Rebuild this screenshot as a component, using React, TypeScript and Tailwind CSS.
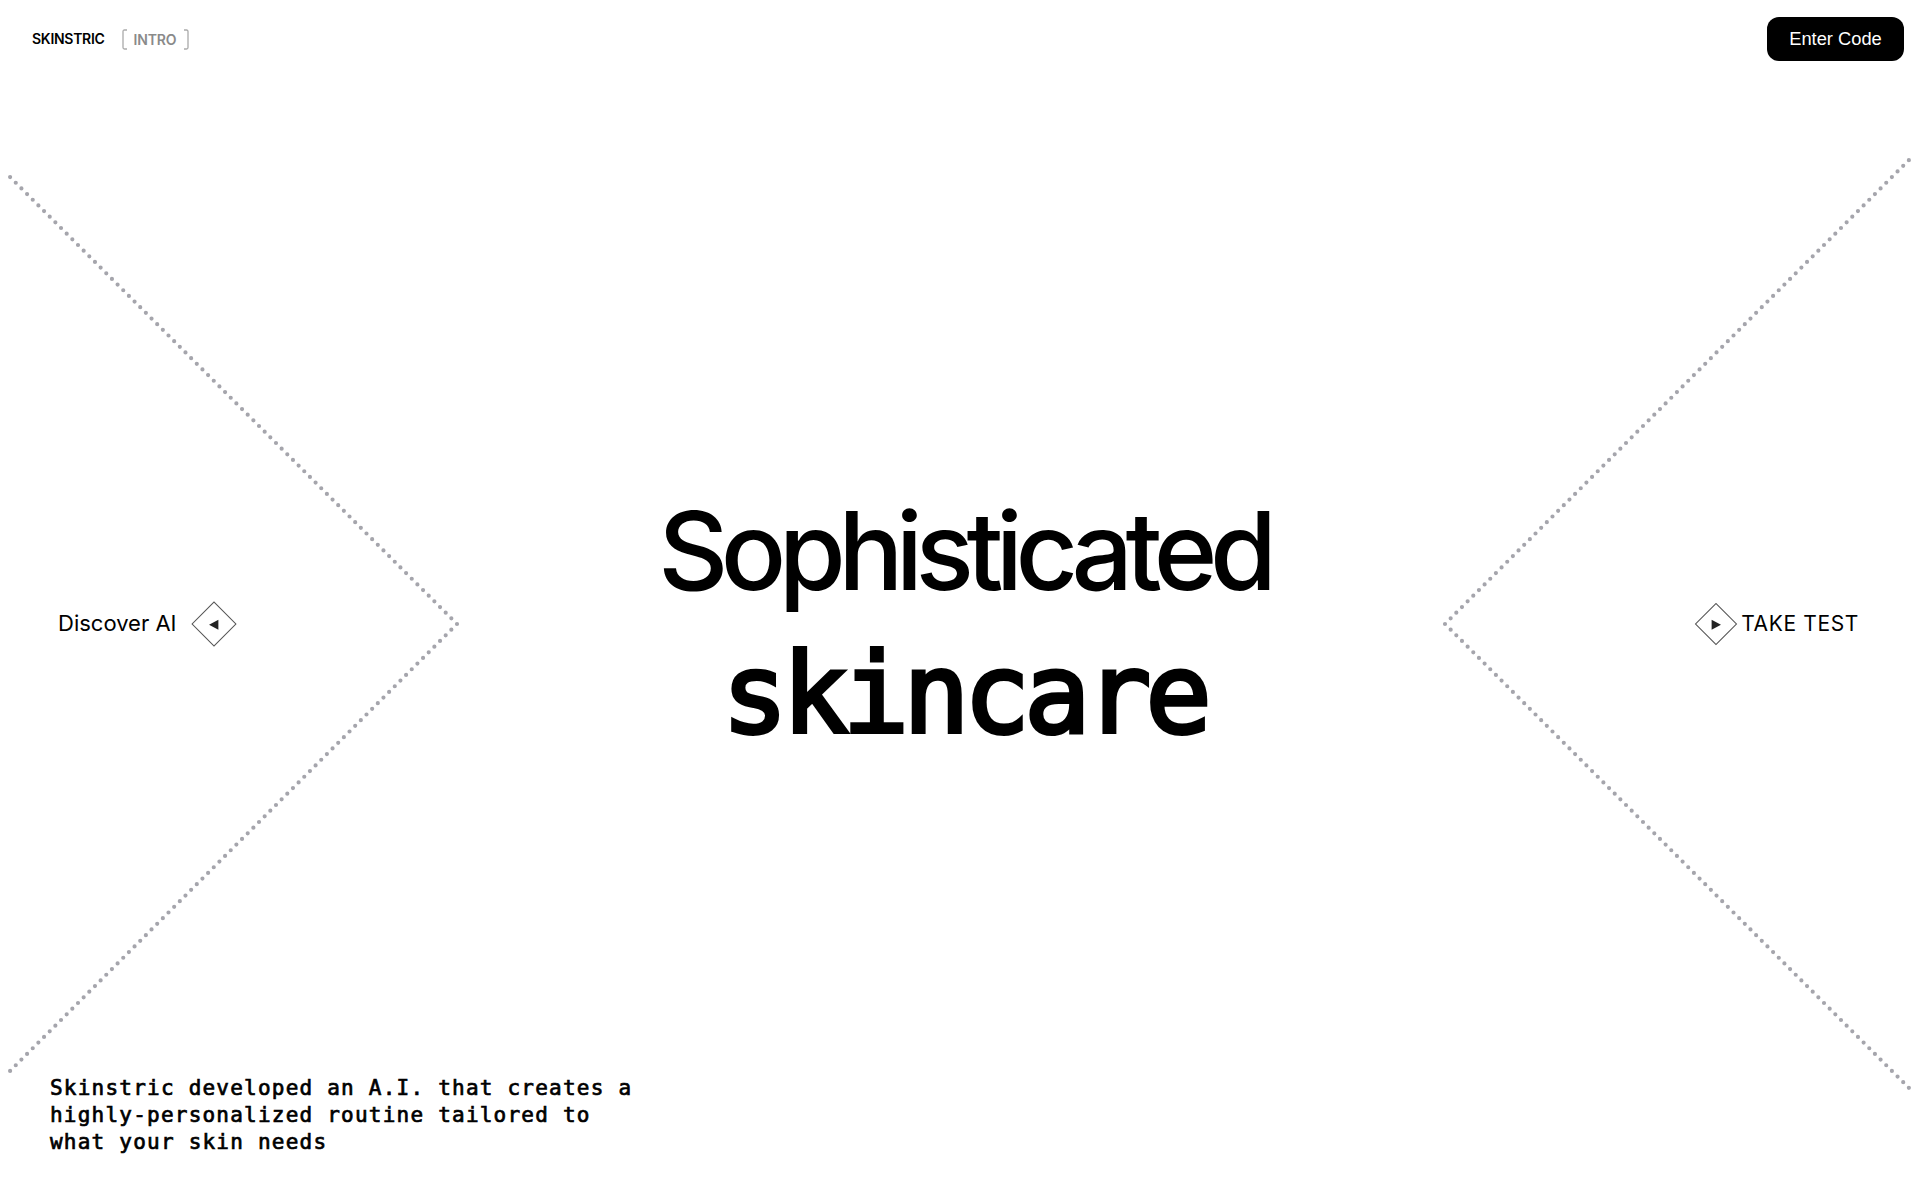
export default function App() {
  return (
    <div className="relative h-[1200px] w-full overflow-hidden bg-white text-black font-['Inter',sans-serif]">
      <svg className="absolute inset-0 pointer-events-none" width="1920" height="1200" viewBox="0 0 1920 1200" fill="none">
        <path d="M457 624L9 176M457 624L7 1074" stroke="#a5a5ac" strokeWidth="4.2" strokeLinecap="round" strokeDasharray="0 8" />
        <path d="M1445 624L1909 160M1445 624L1909 1088" stroke="#a5a5ac" strokeWidth="4.2" strokeLinecap="round" strokeDasharray="0 8" />
      </svg>
      <header className="relative flex h-[78px] items-center justify-between pl-[32px] pr-[16px]">
        <div className="flex items-center">
          <span className="mb-[2px] text-[14px] font-semibold tracking-[-0.02em]">SKINSTRIC</span>
          <svg className="ml-[17px]" width="6" height="21" viewBox="0 0 6 21" fill="none">
            <path d="M5 1H2.5Q1 1 1 2.5V18.5Q1 20 2.5 20H5" stroke="#aaa" strokeWidth="1.3" />
          </svg>
          <span className="ml-[6px] mt-[1px] text-[14px] font-semibold tracking-[-0.015em] text-[#8a8a8a]">INTRO</span>
          <svg className="ml-[7px]" width="6" height="21" viewBox="0 0 6 21" fill="none">
            <path d="M1 1H3.5Q5 1 5 2.5V18.5Q5 20 3.5 20H1" stroke="#aaa" strokeWidth="1.3" />
          </svg>
        </div>
        <button className="flex h-[44px] w-[137px] items-center justify-center rounded-[12px] bg-black font-['Liberation_Sans',sans-serif] text-[18.3px] text-white">
          Enter Code
        </button>
      </header>
      <main className="relative flex h-[997px] items-center justify-between pl-[58px] pr-[61px] pt-[94px]">
        <div className="flex items-center gap-[22px]">
          <span className="mb-[2px] text-[22px] leading-none">Discover AI</span>
          <div className="mr-[6px] flex h-[32px] w-[32px] rotate-45 items-center justify-center border border-[#555]">
            <svg className="-rotate-45" width="11" height="11" viewBox="0 0 10 10"><path d="M0.5 5L9 0.5V9.5Z" fill="#222" /></svg>
          </div>
        </div>
        <div className="mr-[4px] flex-1 pb-[3px] text-center">
          <h1 className="mb-[3px] text-[108.5px] leading-[141px] font-medium tracking-[-0.07em]">Sophisticated</h1>
          <div className="font-['DejaVu_Sans_Mono',monospace] text-[110px] leading-[141px] tracking-[-5.7px] [-webkit-text-stroke:4px_black]">skincare</div>
        </div>
        <div className="flex items-center gap-[10px]">
          <div className="ml-[6px] flex h-[30px] w-[30px] rotate-45 items-center justify-center border border-[#555]">
            <svg className="-rotate-45" width="11" height="11" viewBox="0 0 10 10"><path d="M9.5 5L1 0.5V9.5Z" fill="#222" /></svg>
          </div>
          <span className="text-[21px] leading-none tracking-[0.03em]">TAKE TEST</span>
        </div>
      </main>
      <p className="relative pl-[50px] font-['DejaVu_Sans_Mono',monospace] text-[21px] leading-[27px] tracking-[1.22px] [-webkit-text-stroke:0.7px_black]">
        Skinstric developed an A.I. that creates a<br />
        highly-personalized routine tailored to<br />
        what your skin needs
      </p>
    </div>
  );
}
